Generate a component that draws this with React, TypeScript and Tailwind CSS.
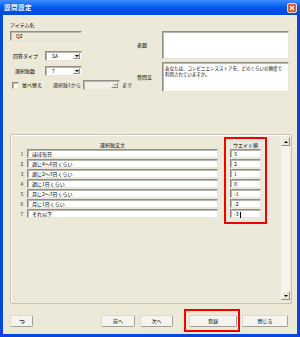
import React from "react";

const font = { fontFamily: '"Noto Sans CJK JP", "Noto Sans", sans-serif' };

const inset =
  "border border-t-[#8f8d86] border-l-[#8f8d86] border-r-[#e8e6dc] border-b-[#e8e6dc] shadow-[inset_1px_1px_0_#b9b7ae]";

const Select = ({ value, disabled }: { value: string; disabled?: boolean }) => (
  <div
    className={`shrink-0 flex items-stretch w-[37px] h-[10px] ${inset} ${disabled ? "bg-[#f1efe6]" : "bg-white"}`}
  >
    <span className="flex-1 pl-[6px] text-[5px] leading-[8px] text-black">{value}</span>
    <span className="w-[7px] my-[1px] mr-[1px] flex items-center justify-center bg-[#ece9d8] border border-[#f6f5ef] border-r-[#8f8d86] border-b-[#8f8d86]">
      <span
        className={`block w-0 h-0 border-l-[2px] border-r-[2px] border-t-[2px] border-l-transparent border-r-transparent ${disabled ? "border-t-[#a9a79e]" : "border-t-black"}`}
      />
    </span>
  </div>
);

const Btn = ({ children, w }: { children: React.ReactNode; w: string }) => (
  <div
    className={`${w} h-[12px] flex items-center justify-center rounded-[2px] bg-[#f5f4ee] border border-[#dcd9cc] border-r-[#a3a091] border-b-[#a3a091] text-[5px] text-black`}
  >
    {children}
  </div>
);

const rows = [
  { no: 1, text: "ほぼ毎日", w: "3" },
  { no: 2, text: "週に4〜6日くらい", w: "2" },
  { no: 3, text: "週に2〜3日くらい", w: "1" },
  { no: 4, text: "週に1日くらい", w: "0" },
  { no: 5, text: "月に2〜3日くらい", w: "-1" },
  { no: 6, text: "月に1日くらい", w: "-2" },
  { no: 7, text: "それ以下", w: "-3" },
];

export default function App() {
  return (
    <div className="w-[300px] h-[337px] bg-[#0a45dc] flex flex-col" style={font}>
      {/* title bar */}
      <div className="h-[15px] flex items-center justify-between pl-[4px] pr-[3px] bg-gradient-to-b from-[#3b8dff] via-[#0058ec] to-[#0049d8]">
        <span className="text-[6.5px] font-bold text-white tracking-[0.5px]">設問設定</span>
        <div className="w-[10px] h-[10px] rounded-[2px] bg-[#e2592f] border border-[#f3d2c6] flex items-center justify-center">
          <svg width="6" height="6" viewBox="0 0 6 6">
            <path d="M1 1l4 4M5 1L1 5" stroke="#fff" strokeWidth="1.2" />
          </svg>
        </div>
      </div>

      {/* body */}
      <div className="flex-1 mx-[3px] mb-[3px] bg-[#ece9d8] flex flex-col text-black">
        {/* top section */}
        <div className="flex items-start">
          <div className="w-[134px] shrink-0 pl-[7px] pt-[5px] flex flex-col">
            <span className="h-[10px] text-[5px] leading-[10px]">アイテム名</span>
            <div className={`mt-[1px] w-[72px] h-[10px] bg-[#ece9d8] ${inset} pl-[5px] text-[5px] leading-[8px]`}>
              Q2
            </div>
            <div className="mt-[10px] flex items-center h-[10px]">
              <span className="ml-[3px] w-[32px] text-[5px] whitespace-nowrap">回答タイプ</span>
              <Select value="SA" />
            </div>
            <div className="mt-[5px] flex items-center h-[10px]">
              <span className="ml-[5px] w-[30px] text-[5px] whitespace-nowrap">選択肢数</span>
              <Select value="7" />
            </div>
            <div className="mt-[4px] flex items-center h-[10px] whitespace-nowrap">
              <span className={`shrink-0 ml-[2px] w-[7px] h-[7px] bg-white ${inset}`} />
              <span className="shrink-0 ml-[3px] w-[31px] text-[5px]">並べ替え</span>
              <span className="shrink-0 w-[30px] text-[5px] text-[#222]">選択肢1から</span>
              <Select value="" disabled />
              <span className="shrink-0 ml-[2px] text-[5px]">まで</span>
            </div>
          </div>
          <div className="mt-[16px] flex flex-col">
            <div className="flex items-center">
              <span className="shrink-0 w-[25px] text-[5px] whitespace-nowrap">表題</span>
              <div className={`shrink-0 w-[127px] h-[28px] bg-white ${inset}`} />
            </div>
            <div className="mt-[3px] flex items-center">
              <span className="shrink-0 w-[25px] text-[5px] whitespace-nowrap">質問文</span>
              <div className={`shrink-0 w-[127px] h-[30px] bg-white ${inset} px-[2px] pt-[2px] text-[4.5px] leading-[6px] whitespace-nowrap`}>
                あなたは、コンビニエンスストアを、どのくらいの頻度で
                <br />
                利用されていますか。
              </div>
            </div>
          </div>
        </div>

        {/* choices panel */}
        <div className="mt-[42px] ml-[7px] w-[282px] h-[170px] border border-[#c7c4b4] rounded-[2px] shadow-[inset_1px_1px_0_#ffffff] flex items-start pt-[2px]">
          <div className="ml-[6px] mt-[4px] flex flex-col">
            <div className="h-[8px] flex">
              <span className="w-[10px]" />
              <span className="w-[191px] pr-[20px] text-center text-[5px] leading-[8px]">選択肢文言</span>
            </div>
            {rows.map((r) => (
              <div key={r.no} className="h-[10px] flex items-start">
                <span className="w-[10px] text-center text-[5px] leading-[9px] text-[#333]">{r.no}</span>
                <div className={`w-[191px] h-[9px] bg-white ${inset} pl-[4px] text-[5px] leading-[7px]`}>
                  {r.text}
                </div>
              </div>
            ))}
          </div>

          <div className="ml-[6px] w-[43px] border-2 border-[#f00000] pt-[2px] pb-[3px] flex flex-col items-center">
            <span className="h-[8px] text-[5px] leading-[8px]">ウエイト値</span>
            {rows.map((r) => (
              <div key={r.no} className="h-[10px]">
                <div className={`w-[31px] h-[9px] bg-white ${inset} pl-[3px] text-[5px] leading-[7px]`}>
                  {r.w}
                  {r.no === 7 && <span className="inline-block w-[1px] h-[6px] bg-black align-middle ml-[1px]" />}
                </div>
              </div>
            ))}
          </div>

          <div className="ml-[14px] w-[9px] h-[163px] flex flex-col bg-[#f4f3ec]">
            <div className="h-[9px] bg-[#ece9d8] border border-[#fbfaf6] border-r-[#8f8d86] border-b-[#8f8d86] flex items-center justify-center">
              <span className="block w-0 h-0 border-l-[2px] border-r-[2px] border-b-[2px] border-l-transparent border-r-transparent border-b-black" />
            </div>
            <div className="flex-1" />
            <div className="h-[9px] bg-[#ece9d8] border border-[#fbfaf6] border-r-[#8f8d86] border-b-[#8f8d86] flex items-center justify-center">
              <span className="block w-0 h-0 border-l-[2px] border-r-[2px] border-t-[2px] border-l-transparent border-r-transparent border-t-black" />
            </div>
          </div>
        </div>

        {/* buttons */}
        <div className="mt-[5px] flex items-start">
          <div className="ml-[7px] mt-[6px]">
            <Btn w="w-[23px]">
              <svg width="6" height="5" viewBox="0 0 6 5">
                <path d="M1.5 1.5h2.5a1.3 1.3 0 0 1 0 2.6H2.5" fill="none" stroke="#222" strokeWidth="0.8" />
                <path d="M0.3 1.5L1.8 0.4v2.2z" fill="#1f4fc8" />
              </svg>
            </Btn>
          </div>
          <div className="ml-[68px] mt-[6px]">
            <Btn w="w-[34px]">前へ</Btn>
          </div>
          <div className="ml-[5px] mt-[6px]">
            <Btn w="w-[33px]">次へ</Btn>
          </div>
          <div className="ml-[11px] w-[56px] h-[23px] border-2 border-[#f00000] pt-[4px] pl-[3px]">
            <Btn w="w-[48px]">登録</Btn>
          </div>
          <div className="ml-[2px] mt-[6px]">
            <Btn w="w-[46px]">閉じる</Btn>
          </div>
        </div>
      </div>
    </div>
  );
}
